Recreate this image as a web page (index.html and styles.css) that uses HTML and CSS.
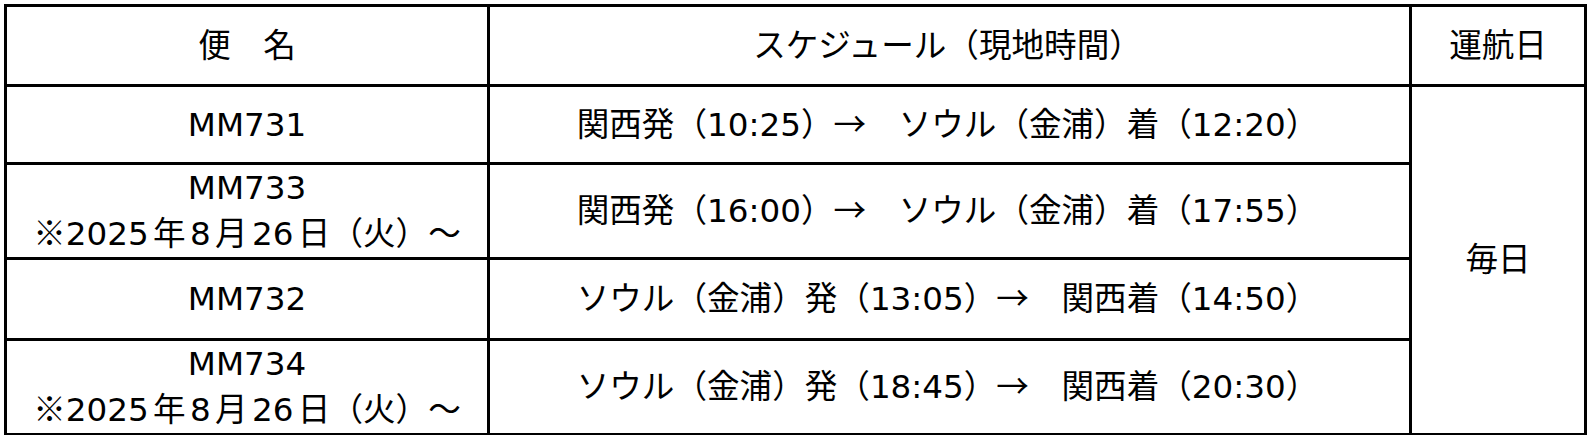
FILE: index.html
```html
<!DOCTYPE html>
<html lang="ja">
<head>
<meta charset="utf-8">
<title>運航スケジュール</title>
<link rel="stylesheet" href="styles.css">
</head>
<body>
<table class="schedule">
  <colgroup>
    <col class="c-flight">
    <col class="c-time">
    <col class="c-day">
  </colgroup>
  <tr class="r-head">
    <td>便　名</td>
    <td class="mid">スケジュール（現地時間）</td>
    <td>運航日</td>
  </tr>
  <tr class="r-one">
    <td>MM731</td>
    <td class="mid">関西発（10:25）<span class="sym">→　</span>ソウル（金浦）着（12:20）</td>
    <td rowspan="4">毎日</td>
  </tr>
  <tr class="r-two">
    <td class="flight">MM733<br><span class="sym">※</span>2025 年 8 月 26 日（火）～</td>
    <td class="mid">関西発（16:00）<span class="sym">→　</span>ソウル（金浦）着（17:55）</td>
  </tr>
  <tr class="r-three">
    <td>MM732</td>
    <td class="mid">ソウル（金浦）発（13:05）<span class="sym">→　</span>関西着（14:50）</td>
  </tr>
  <tr class="r-four">
    <td class="flight">MM734<br><span class="sym">※</span>2025 年 8 月 26 日（火）～</td>
    <td class="mid">ソウル（金浦）発（18:45）<span class="sym">→　</span>関西着（20:30）</td>
  </tr>
</table>
</body>
</html>
```

FILE: styles.css
```css
html, body {
  margin: 0;
  padding: 0;
  background: #ffffff;
}

body {
  padding: 4px 0 0 4px;
}

.schedule {
  border-collapse: separate;
  border-spacing: 0;
  table-layout: fixed;
  width: 1583px;
  border-left: 3px solid #000;
  border-top: 3px solid #000;
  font-family: "DejaVu Sans", "Noto Sans CJK JP", sans-serif;
  font-size: 32.6px;
  color: #000;
}

.c-flight { width: 483px; }
.c-time { width: 922px; }
.c-day { width: 175px; }

.schedule td {
  box-sizing: border-box;
  border-right: 3px solid #000;
  border-bottom: 3px solid #000;
  padding: 0;
  text-align: center;
  vertical-align: middle;
  line-height: 46px;
  white-space: nowrap;
}

.schedule td.mid {
  padding-right: 4px;
}

.schedule td.flight {
  word-spacing: -6px;
}

.sym {
  font-family: "Noto Sans CJK JP", sans-serif;
  line-height: 1;
}

.r-head td { height: 80px; }
.r-one td { height: 78px; }
.r-two td { height: 95px; }
.r-three td { height: 81px; }
.r-four td { height: 93px; }
```
